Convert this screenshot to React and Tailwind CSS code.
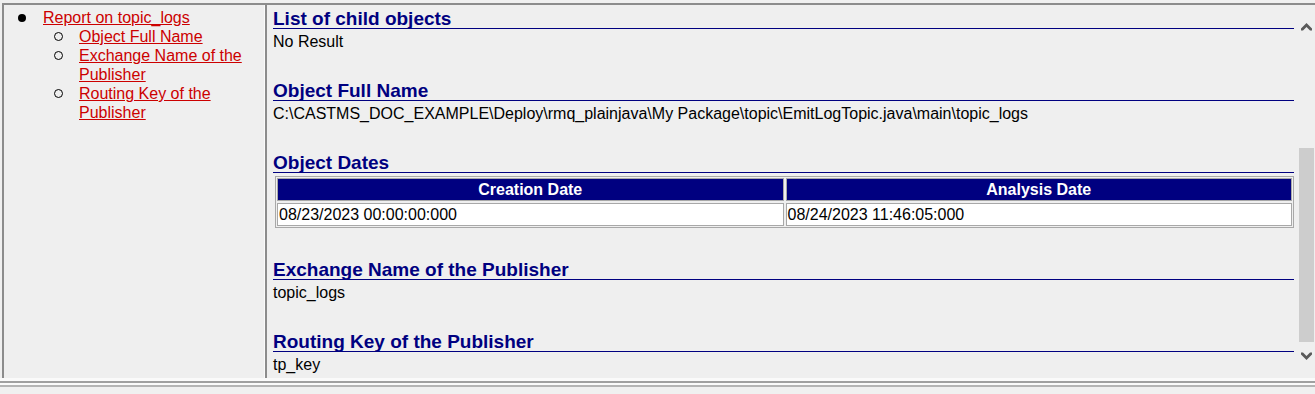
import React from "react";

const sections = [
  { id: 1, title: "List of child objects", value: "No Result" },
  {
    id: 2,
    title: "Object Full Name",
    value:
      "C:\\CASTMS_DOC_EXAMPLE\\Deploy\\rmq_plainjava\\My Package\\topic\\EmitLogTopic.java\\main\\topic_logs",
  },
];

const tail = [
  { id: 4, title: "Exchange Name of the Publisher", value: "topic_logs" },
  { id: 5, title: "Routing Key of the Publisher", value: "tp_key" },
];

const links = [
  "Object Full Name",
  "Exchange Name of the Publisher",
  "Routing Key of the Publisher",
];

const Heading = ({ children }) => (
  <h2 className="h-[23px] border-b border-[#000080] pt-[3px] text-[19px] font-bold leading-[19px] text-[#000080]">
    {children}
  </h2>
);

const Section = ({ title, value, className }) => (
  <div className={className}>
    <Heading>{title}</Heading>
    <p className="pt-[1px] text-[16px] leading-[24px] text-black">{value}</p>
  </div>
);

const App = () => {
  return (
    <div
      className="h-[394px] w-[1315px] overflow-hidden bg-[#f0f0f0] pt-[3px]"
      style={{ fontFamily: '"Liberation Sans", Arial, sans-serif' }}
    >
      <div className="ml-[2px] flex h-[375px] border-l-2 border-t-2 border-[#8c8c8c]">
        {/* left nav */}
        <div className="w-[260px] shrink-0 bg-[#efefef] pt-[3px] text-[16px] leading-[19px]">
          <div className="flex">
            <div className="flex h-[19px] w-[39px] shrink-0 items-center">
              <span className="ml-[14px] h-[8px] w-[8px] rounded-full bg-black" />
            </div>
            <div>
              <a href="#" className="text-[#cc0000] underline">
                Report on topic_logs
              </a>
              {links.map((label) => (
                <div key={label} className="flex">
                  <div className="flex h-[19px] w-[36px] shrink-0 items-center">
                    <span className="ml-[11px] h-[9px] w-[9px] rounded-full border-[1.5px] border-black" />
                  </div>
                  <a href="#" className="text-[#cc0000] underline">
                    {label}
                  </a>
                </div>
              ))}
            </div>
          </div>
        </div>
        <div className="w-[1px] shrink-0 bg-[#fafafa]" />
        <div className="w-[2px] shrink-0 bg-[#8c8c8c]" />

        {/* content */}
        <div className="flex min-w-0 flex-1 bg-[#efefef]">
          <div className="min-w-0 flex-1 pl-[6px] pr-[4px] pt-[1px]">
            <Section {...sections[0]} />
            <Section {...sections[1]} className="mt-[24px]" />

            <div className="mt-[24px]">
              <Heading>Object Dates</Heading>
              <div className="ml-[2px] mt-[3px] grid grid-cols-2 gap-[2px] border border-[#a8a8a8] p-[1px]">
                <div className="h-[23px] border border-[#a8a8a8] bg-[#000080] text-center text-[16px] font-bold leading-[21px] text-white">
                  Creation Date
                </div>
                <div className="h-[23px] border border-[#a8a8a8] bg-[#000080] text-center text-[16px] font-bold leading-[21px] text-white">
                  Analysis Date
                </div>
                <div className="h-[23px] border border-[#a8a8a8] bg-white px-[1px] text-[16px] leading-[21px] text-black">
                  08/23/2023 00:00:00:000
                </div>
                <div className="h-[23px] border border-[#a8a8a8] bg-white px-[1px] text-[16px] leading-[21px] text-black">
                  08/24/2023 11:46:05:000
                </div>
              </div>
            </div>

            <Section {...tail[0]} className="mt-[29px]" />
            <Section {...tail[1]} className="mt-[24px]" />
          </div>

          {/* scrollbar */}
          <div className="flex w-[17px] shrink-0 flex-col items-center">
            <svg width="11" height="8" viewBox="0 0 11 8" className="mt-[18px] block shrink-0">
              <polygon points="0,5.5 5.5,0 11,5.5 11,7.5 9,7.5 5.5,4 2,7.5 0,7.5" fill="#5a5a5a" />
            </svg>
            <div className="mt-[117px] h-[194px] w-[15px] shrink-0 bg-[#cdcdcd]" />
            <svg width="11" height="8" viewBox="0 0 11 8" className="mt-[10px] block shrink-0">
              <polygon points="0,2.5 5.5,8 11,2.5 11,0.5 9,0.5 5.5,4 2,0.5 0,0.5" fill="#5a5a5a" />
            </svg>
          </div>
        </div>
      </div>
      <div className="h-[3px] bg-[#fafafa]" />
      <div className="h-[2px] bg-[#a0a0a0]" />
      <div className="h-[2px] bg-[#fafafa]" />
      <div className="h-[2px] bg-[#b4b4b4]" />
    </div>
  );
};

export default App;
